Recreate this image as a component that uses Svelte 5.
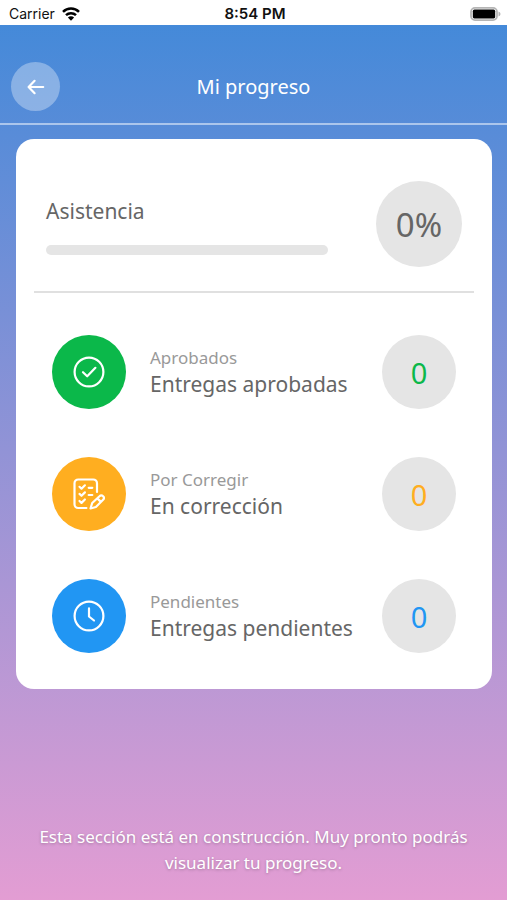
<script lang="ts">
	type DeliveryType = 'approved' | 'review' | 'pending';

	interface Delivery {
		type: DeliveryType;
		label: string;
		title: string;
		count: number;
	}

	let attendance = $state(0);

	let deliveries: Delivery[] = $state([
		{ type: 'approved', label: 'Aprobados', title: 'Entregas aprobadas', count: 0 },
		{ type: 'review', label: 'Por Corregir', title: 'En corrección', count: 0 },
		{ type: 'pending', label: 'Pendientes', title: 'Entregas pendientes', count: 0 }
	]);
</script>

<div class="screen">
	<div class="status-bar">
		<div class="carrier">
			<span>Carrier</span>
			<svg width="18" height="14" viewBox="0 0 18 14" aria-hidden="true">
				<g fill="none" stroke="#000" stroke-width="2.5">
					<path d="M1 4.9a11.3 11.3 0 0 1 16 0" />
					<path d="M4 8.2a7.1 7.1 0 0 1 10 0" />
				</g>
				<path d="M5.9 10.5a4.4 4.4 0 0 1 6.2 0L9 13.8z" />
			</svg>
		</div>
		<span class="time">8:54 PM</span>
		<svg class="battery" width="31" height="14" viewBox="0 0 31 14" aria-hidden="true">
			<rect x="1" y="0.9" width="26" height="12.2" rx="4" fill="#fff" stroke="#b5b5b5" stroke-width="1.8" />
			<rect x="2.8" y="2.6" width="22.4" height="8.8" rx="1.6" />
			<path d="M28.5 4.4q2 .8 2 2.6t-2 2.6z" fill="#b5b5b5" />
		</svg>
	</div>

	<header>
		<button type="button" class="back" aria-label="Volver">
			<svg width="18" height="16" viewBox="0 0 18 16" aria-hidden="true">
				<path
					d="M16.2 8H2M7.6 1.8 1.6 8l6 6.2"
					fill="none"
					stroke="#fff"
					stroke-width="2.2"
					stroke-linecap="round"
					stroke-linejoin="round"
				/>
			</svg>
		</button>
		<h1>Mi progreso</h1>
	</header>

	<main>
		<section class="card">
			<div class="attendance">
				<div class="attendance-info">
					<label for="attendance">Asistencia</label>
					<progress id="attendance" max="100" value={attendance}></progress>
				</div>
				<div class="percent">{attendance}%</div>
			</div>

			<ul>
				{#each deliveries as delivery}
					<li class={delivery.type}>
						<div class="icon">
							<svg width="32" height="32" viewBox="0 0 32 32" aria-hidden="true">
								{#if delivery.type === 'approved'}
									<circle cx="16" cy="16" r="14.4" />
									<path d="m10 16.2 4.2 4.1 8.2-8.5" />
								{:else if delivery.type === 'review'}
									<path d="M13.4 30H5.2a3.7 3.7 0 0 1-3.7-3.7V5.2a3.7 3.7 0 0 1 3.7-3.7h15.1A3.7 3.7 0 0 1 24 5.2v8.8" />
									<path d="m6.5 8.8 2 1.9 3.4-3.4M6.5 15.9l2 1.9 3.4-3.4M6.5 23l2 1.9 3.4-3.4M15.7 9.8h3.6M15.7 17h3.6" />
									<path d="m17.5 30.500 1.700-5.500 7.300-6.800a2.500 2.500 0 0 1 3.600 3.600l-7.200 7.200zM24.600 20.600l3.300 3.300" />
								{:else}
									<circle cx="16" cy="16" r="14.4" />
									<path d="M16 8.400v8.100l5 4" />
								{/if}
							</svg>
						</div>
						<div class="text">
							<span class="label">{delivery.label}</span>
							<span class="title">{delivery.title}</span>
						</div>
						<div class="count">{delivery.count}</div>
					</li>
				{/each}
			</ul>
		</section>
	</main>

	<footer>Esta sección está en construcción. Muy pronto podrás visualizar tu progreso.</footer>
</div>

<style>
	:global(body) {
		margin: 0;
	}

	.screen {
		display: flex;
		flex-direction: column;
		box-sizing: border-box;
		min-height: 100vh;
		background: linear-gradient(#4089d9, #e39dd3);
		color: #666;
		font-family: 'Noto Sans', sans-serif;
	}

	.status-bar {
		display: grid;
		grid-template-columns: 1fr auto 1fr;
		align-items: center;
		height: 25px;
		padding: 2px 6px 0 9px;
		box-sizing: border-box;
		background: #fff;
		color: #111;
		font-family: Inter, sans-serif;
		font-size: 14px;
	}

	.carrier {
		display: flex;
		align-items: center;
		gap: 7px;
	}

	.time {
		font-size: 15px;
		font-weight: 600;
	}

	.battery {
		justify-self: end;
	}

	header {
		display: grid;
		grid-template-columns: 49px 1fr 49px;
		align-items: center;
		padding: 37px 11px 12px;
		border-bottom: 2px solid rgba(255, 255, 255, 0.5);
	}

	.back {
		display: flex;
		align-items: center;
		justify-content: center;
		width: 49px;
		height: 49px;
		padding: 0;
		border: none;
		border-radius: 50%;
		background: rgba(255, 255, 255, 0.33);
		cursor: pointer;
	}

	h1 {
		margin: 0;
		color: #fff;
		font-size: 20px;
		font-weight: 400;
		line-height: 28px;
		text-align: center;
	}

	main {
		padding: 14px 15px 14px 16px;
	}

	.card {
		padding: 0 18px;
		border-radius: 18px;
		background: #fff;
	}

	.attendance {
		display: flex;
		align-items: center;
		gap: 48px;
		padding: 42px 12px 24px;
		border-bottom: 2px solid #e0e0e0;
	}

	.attendance-info {
		display: flex;
		flex: 1;
		flex-direction: column;
		gap: 20px;
		padding-top: 3px;
	}

	.attendance-info label {
		font-size: 21px;
		line-height: 28px;
	}

	progress {
		display: block;
		width: 100%;
		height: 10px;
		border: none;
		border-radius: 5px;
		overflow: hidden;
		appearance: none;
		background: #e5e5e5;
	}

	progress::-webkit-progress-bar {
		background: #e5e5e5;
	}

	progress::-webkit-progress-value {
		background: #2196f3;
	}

	.percent,
	.count,
	.icon {
		display: flex;
		flex-shrink: 0;
		align-items: center;
		justify-content: center;
		border-radius: 50%;
	}

	.percent {
		width: 86px;
		height: 86px;
		background: #e5e5e5;
		font-size: 33px;
	}

	ul {
		display: flex;
		flex-direction: column;
		gap: 48px;
		margin: 0;
		padding: 42px 18px 36px;
		list-style: none;
	}

	li {
		display: flex;
		align-items: center;
	}

	.icon,
	.count {
		width: 74px;
		height: 74px;
	}

	.icon svg {
		fill: none;
		stroke: #fff;
		stroke-width: 2.2;
		stroke-linecap: round;
		stroke-linejoin: round;
	}

	.text {
		display: flex;
		flex: 1;
		flex-direction: column;
		padding-left: 24px;
		white-space: nowrap;
	}

	.label {
		color: #999;
		font-size: 17px;
		line-height: 24px;
	}

	.title {
		font-size: 21px;
		line-height: 28px;
	}

	.count {
		background: #e5e5e5;
		font-size: 29px;
	}

	.approved .icon {
		background: #0bb84a;
	}

	.approved .count {
		color: #0bb84a;
	}

	.review .icon {
		background: #ffae20;
	}

	.review .count {
		color: #ffae20;
	}

	.pending .icon {
		background: #2196f3;
	}

	.pending .count {
		color: #2196f3;
	}

	footer {
		margin-top: auto;
		padding: 20px 36px 24px;
		color: #fff;
		font-size: 17px;
		line-height: 26px;
		text-align: center;
		text-shadow: 0 1px 3px rgba(0, 0, 0, 0.25);
	}
</style>
